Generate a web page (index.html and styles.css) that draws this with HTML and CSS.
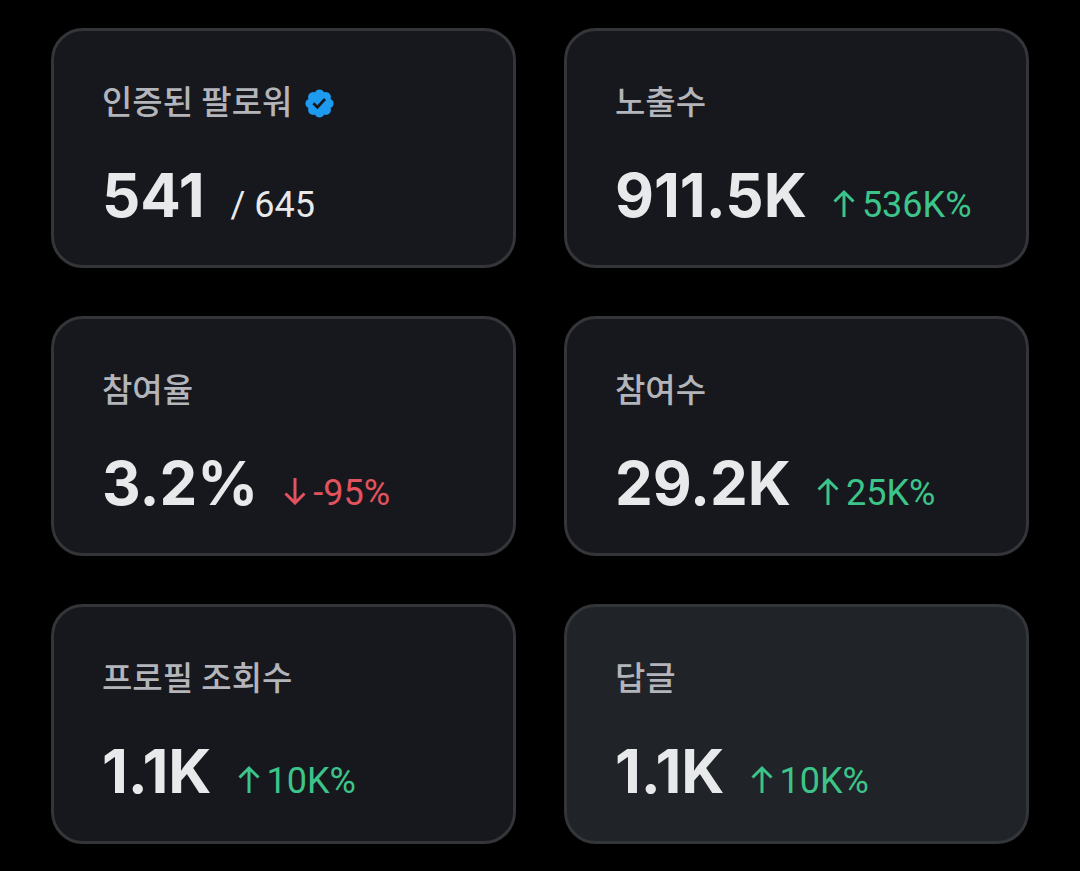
FILE: index.html
```html
<!DOCTYPE html>
<html lang="ko">
<head>
<meta charset="utf-8">
<meta name="viewport" content="width=device-width, initial-scale=1">
<title>계정 분석</title>
<link rel="stylesheet" href="styles.css">
</head>
<body>
<svg class="sprite" aria-hidden="true">
  <symbol id="up" viewBox="0 0 22 28"><path d="M11 28V3M1.500 12.500l9.500-9.500 9.500 9.500"/></symbol>
  <symbol id="down" viewBox="0 0 22 28"><path d="M11 1v25M1.500 16.500l9.500 9.500 9.500-9.500"/></symbol>
</svg>
<main class="grid">
  <section class="card">
    <h2 class="label">인증된 팔로워
      <svg class="badge" viewBox="0 0 22 22" aria-hidden="true"><path fill="#1d9bf0" d="M20.396 11c-.018-.646-.215-1.275-.57-1.816-.354-.54-.852-.972-1.438-1.246.223-.607.27-1.264.14-1.897-.131-.634-.437-1.218-.882-1.687-.47-.445-1.053-.75-1.687-.882-.633-.13-1.29-.083-1.897.14-.273-.587-.704-1.086-1.245-1.44S11.647 1.62 11 1.604c-.646.017-1.273.213-1.813.568s-.969.854-1.24 1.44c-.608-.223-1.267-.272-1.902-.14-.635.13-1.22.436-1.69.882-.445.47-.749 1.055-.878 1.688-.13.633-.08 1.29.144 1.896-.587.274-1.087.705-1.443 1.245-.356.54-.555 1.17-.574 1.817.02.647.218 1.276.574 1.817.356.54.856.972 1.443 1.245-.224.606-.274 1.263-.144 1.896.13.634.433 1.218.877 1.688.47.443 1.054.747 1.687.878.633.132 1.29.084 1.897-.136.274.586.705 1.084 1.246 1.439.54.354 1.17.551 1.816.569.647-.016 1.276-.213 1.817-.567s.972-.854 1.245-1.44c.604.239 1.266.296 1.903.164.636-.132 1.22-.447 1.68-.907.46-.46.776-1.044.908-1.681s.075-1.299-.165-1.903c.586-.274 1.084-.705 1.439-1.246.354-.54.551-1.17.569-1.816zM9.662 14.85l-3.429-3.428 1.293-1.302 2.072 2.072 4.4-4.794 1.347 1.246z"/></svg>
    </h2>
    <p class="row"><strong class="value">541</strong><span class="total">/ 645</span></p>
  </section>
  <section class="card">
    <h2 class="label">노출수</h2>
    <p class="row"><strong class="value">911.5K</strong><span class="delta"><svg class="arrow" aria-hidden="true"><use href="#up"/></svg>536K%</span></p>
  </section>
  <section class="card">
    <h2 class="label">참여율</h2>
    <p class="row"><strong class="value">3.2%</strong><span class="delta fall"><svg class="arrow" aria-hidden="true"><use href="#down"/></svg>-95%</span></p>
  </section>
  <section class="card">
    <h2 class="label">참여수</h2>
    <p class="row"><strong class="value">29.2K</strong><span class="delta"><svg class="arrow" aria-hidden="true"><use href="#up"/></svg>25K%</span></p>
  </section>
  <section class="card">
    <h2 class="label">프로필 조회수</h2>
    <p class="row"><strong class="value">1.1K</strong><span class="delta"><svg class="arrow" aria-hidden="true"><use href="#up"/></svg>10K%</span></p>
  </section>
  <section class="card active">
    <h2 class="label">답글</h2>
    <p class="row"><strong class="value">1.1K</strong><span class="delta"><svg class="arrow" aria-hidden="true"><use href="#up"/></svg>10K%</span></p>
  </section>
</main>
</body>
</html>
```
FILE: styles.css
```css
* { box-sizing: border-box; }
body {
  margin: 0;
  background: #000;
  color: #e7e9ea;
  font-family: Inter, "Noto Sans CJK KR", sans-serif;
}
.sprite { display: none; }
.grid {
  display: grid;
  grid-template-columns: repeat(2, minmax(0, 1fr));
  gap: 48px;
  padding: 28px 51px;
}
.card {
  padding: 48px 48px 34px;
  border: 3px solid #333539;
  border-radius: 32px;
  background: #17181d;
}
.active { background: #202327; }
.label {
  display: flex;
  align-items: center;
  gap: 11px;
  margin: 0 0 32px;
  color: #b3b5ba;
  font-family: Roboto, "Noto Sans CJK KR", sans-serif;
  font-size: 33px;
  font-weight: 500;
  line-height: 48px;
}
.badge { width: 33px; height: 33px; }
.row {
  display: flex;
  align-items: baseline;
  gap: 26px;
  margin: 0;
  line-height: 72px;
}
.value { font-size: 60px; font-weight: 700; }
.total, .delta {
  font-family: Roboto, sans-serif;
  font-size: 36px;
  font-weight: 400;
  line-height: 40px;
}
.delta { display: flex; align-items: baseline; gap: 7px; color: #3cc48a; }
.fall { color: #e2535f; }
.arrow {
  width: 22px;
  height: 28px;
  fill: none;
  stroke: currentColor;
  stroke-width: 3;
}
```
